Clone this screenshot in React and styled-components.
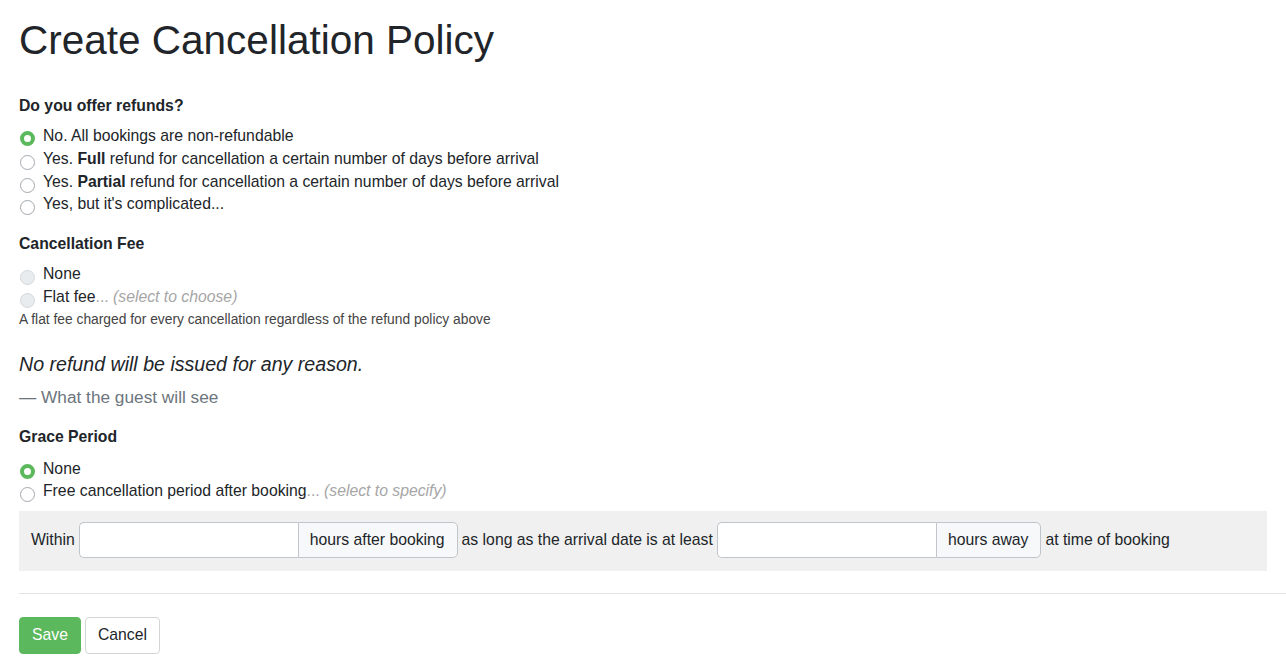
import styled, { createGlobalStyle } from "styled-components";

const GlobalStyle = createGlobalStyle`
  body {
    margin: 0;
    background: #fff;
    font-family: "Liberation Sans", Arial, sans-serif;
    font-size: 15.75px;
    line-height: 22.86px;
    color: #212529;
  }
`;

const Page = styled.div`
  padding: 18px 19px 20px 19px;
  overflow: hidden;
`;

const Title = styled.h1`
  margin: 0 0 33px 0;
  font-size: 40.5px;
  font-weight: 400;
  line-height: 44px;
`;

const Section = styled.div`
  margin-bottom: ${(p) => p.$gap ?? 17}px;
`;

const Heading = styled.div`
  font-weight: bold;
  margin-bottom: ${(p) => p.$gap ?? 7}px;
`;

const Option = styled.label`
  display: flex;
  align-items: flex-start;
  cursor: pointer;

  b {
    font-weight: bold;
  }
`;

const Radio = styled.input.attrs({ type: "radio" })`
  appearance: none;
  -webkit-appearance: none;
  box-sizing: border-box;
  flex-shrink: 0;
  width: 15px;
  height: 15px;
  margin: 7px 8px 0 1px;
  border-radius: 50%;
  border: 1px solid #a3a8ad;
  background: #fff;

  &:checked {
    margin-top: 6px;
    border: 4px solid #5cb85c;
  }

  &:disabled {
    border-color: #d5d8db;
    background: #e9ecef;
  }
`;

const Muted = styled.span`
  color: #a6a6a6;
  font-style: ${(p) => (p.$italic ? "italic" : "normal")};
`;

const Help = styled.div`
  font-size: 13.8px;
  line-height: 19px;
  color: #444;
  margin-top: 1px;
`;

const Quote = styled.div`
  font-size: 19.6px;
  line-height: 28px;
  font-style: italic;
  margin-bottom: 8px;
`;

const QuoteFooter = styled.div`
  font-size: 17.25px;
  color: #6c757d;
  margin-bottom: 17px;
`;

const Well = styled.div`
  display: flex;
  align-items: center;
  gap: 4px;
  margin-top: 8px;
  padding: 11px 12px 13px 12px;
  background: #f0f0f0;
  white-space: nowrap;
`;

const InputGroup = styled.div`
  display: flex;
  height: 36px;
`;

const TextInput = styled.input`
  box-sizing: border-box;
  width: ${(p) => p.$width}px;
  height: 36px;
  padding: 6px 12px;
  border: 1px solid #bfc5cb;
  border-right: none;
  border-radius: 5px 0 0 5px;
  background: #fff;
  font: inherit;
  outline: none;
`;

const Addon = styled.span`
  box-sizing: border-box;
  display: flex;
  align-items: center;
  height: 36px;
  padding: 0 12px 0 11px;
  background: #f7f8f9;
  border: 1px solid #bfc5cb;
  border-radius: 0 5px 5px 0;
  color: #212529;
`;

const Rule = styled.hr`
  margin: 22px -40px 23px 0;
  border: none;
  border-top: 1px solid #e3e3e3;
`;

const Actions = styled.div`
  display: flex;
  gap: 4px;
`;

const Button = styled.button`
  height: 37px;
  padding: 0 12px;
  font: inherit;
  border-radius: 4px;
  cursor: pointer;
  border: 1px solid ${(p) => (p.$primary ? "#5cb85c" : "#d5d5d5")};
  background: ${(p) => (p.$primary ? "#5cb85c" : "#fff")};
  color: ${(p) => (p.$primary ? "#fff" : "#212529")};
`;

export default function App() {
  return (
    <Page>
      <GlobalStyle />
      <Title>Create Cancellation Policy</Title>

      <Section>
        <Heading>Do you offer refunds?</Heading>
        <Option>
          <Radio name="refund" defaultChecked />
          <span>No. All bookings are non-refundable</span>
        </Option>
        <Option>
          <Radio name="refund" />
          <span>
            Yes. <b>Full</b> refund for cancellation a certain number of days before arrival
          </span>
        </Option>
        <Option>
          <Radio name="refund" />
          <span>
            Yes. <b>Partial</b> refund for cancellation a certain number of days before arrival
          </span>
        </Option>
        <Option>
          <Radio name="refund" />
          <span>Yes, but it's complicated...</span>
        </Option>
      </Section>

      <Section $gap={21}>
        <Heading>Cancellation Fee</Heading>
        <Option>
          <Radio name="fee" disabled />
          <span>None</span>
        </Option>
        <Option>
          <Radio name="fee" disabled />
          <span>
            Flat fee<Muted>...</Muted> <Muted $italic>(select to choose)</Muted>
          </span>
        </Option>
        <Help>A flat fee charged for every cancellation regardless of the refund policy above</Help>
      </Section>

      <Quote>No refund will be issued for any reason.</Quote>
      <QuoteFooter>— What the guest will see</QuoteFooter>

      <Section $gap={0}>
        <Heading $gap={9}>Grace Period</Heading>
        <Option>
          <Radio name="grace" defaultChecked />
          <span>None</span>
        </Option>
        <Option>
          <Radio name="grace" />
          <span>
            Free cancellation period after booking<Muted>...</Muted>{" "}
            <Muted $italic>(select to specify)</Muted>
          </span>
        </Option>
      </Section>

      <Well>
        <span>Within</span>
        <InputGroup>
          <TextInput $width={219} />
          <Addon>hours after booking</Addon>
        </InputGroup>
        <span>as long as the arrival date is at least</span>
        <InputGroup>
          <TextInput $width={219} />
          <Addon>hours away</Addon>
        </InputGroup>
        <span>at time of booking</span>
      </Well>

      <Rule />

      <Actions>
        <Button $primary>Save</Button>
        <Button>Cancel</Button>
      </Actions>
    </Page>
  );
}
